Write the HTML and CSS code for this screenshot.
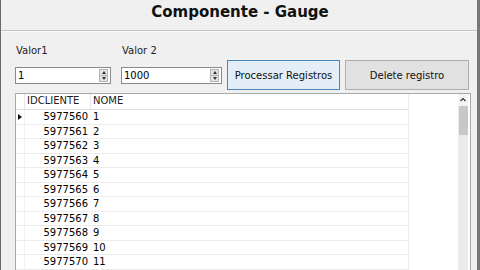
FILE: index.html
```html
<!DOCTYPE html>
<html lang="pt">
  <head>
    <meta charset="UTF-8" />
    <title>Componente - Gauge</title>
    <link rel="stylesheet" href="styles.css">
  </head>
  <body>
    <div class="window">
      <div class="titlebar">
        <h1>Componente - Gauge</h1>
      </div>

      <div class="toolbar">
        <div class="field field-1">
          <label>Valor1</label>
          <div class="control">
            <div class="spin-input">
              <span class="value">1</span>
              <span class="spinner"><span class="up"></span><span class="down"></span></span>
            </div>
          </div>
        </div>
        <div class="field field-2">
          <label>Valor 2</label>
          <div class="control">
            <div class="spin-input">
              <span class="value">1000</span>
              <span class="spinner"><span class="up"></span><span class="down"></span></span>
            </div>
          </div>
        </div>
        <button class="btn btn-process">Processar Registros</button>
        <button class="btn btn-delete">Delete registro</button>
      </div>

      <div class="grid">
        <div class="rows">
          <div class="row head">
            <div class="cell mark"></div>
            <div class="cell id">IDCLIENTE</div>
            <div class="cell nome">NOME</div>
          </div>
          <div class="row">
            <div class="cell mark"><span class="current"></span></div>
            <div class="cell id">5977560</div>
            <div class="cell nome">1</div>
          </div>
          <div class="row">
            <div class="cell mark"></div>
            <div class="cell id">5977561</div>
            <div class="cell nome">2</div>
          </div>
          <div class="row">
            <div class="cell mark"></div>
            <div class="cell id">5977562</div>
            <div class="cell nome">3</div>
          </div>
          <div class="row">
            <div class="cell mark"></div>
            <div class="cell id">5977563</div>
            <div class="cell nome">4</div>
          </div>
          <div class="row">
            <div class="cell mark"></div>
            <div class="cell id">5977564</div>
            <div class="cell nome">5</div>
          </div>
          <div class="row">
            <div class="cell mark"></div>
            <div class="cell id">5977565</div>
            <div class="cell nome">6</div>
          </div>
          <div class="row">
            <div class="cell mark"></div>
            <div class="cell id">5977566</div>
            <div class="cell nome">7</div>
          </div>
          <div class="row">
            <div class="cell mark"></div>
            <div class="cell id">5977567</div>
            <div class="cell nome">8</div>
          </div>
          <div class="row">
            <div class="cell mark"></div>
            <div class="cell id">5977568</div>
            <div class="cell nome">9</div>
          </div>
          <div class="row">
            <div class="cell mark"></div>
            <div class="cell id">5977569</div>
            <div class="cell nome">10</div>
          </div>
          <div class="row">
            <div class="cell mark"></div>
            <div class="cell id">5977570</div>
            <div class="cell nome">11</div>
          </div>
        </div>
        <div class="blank"></div>
        <div class="vscroll">
          <div class="arrow">
            <svg width="10" height="12" viewBox="0 0 10 12">
              <polyline points="2.5,7 5,4.5 7.5,7" fill="none" stroke="#333" stroke-width="1.2" />
            </svg>
          </div>
          <div class="thumb"></div>
        </div>
      </div>
    </div>
  </body>
</html>
```

FILE: styles.css
```css
body {
  margin: 0;
  padding: 0;
  width: 480px;
  height: 270px;
  overflow: hidden;
  background-color: #f0f0f0;
  font-family: "DejaVu Sans", Verdana, sans-serif;
  font-size: 10px;
  color: #000;
}
.window {
  height: 270px;
  border-left: 1px solid #6b6b6b;
  border-right: 3px solid #777;
  overflow: hidden;
}
.titlebar {
  height: 30px;
  border-bottom: 1px solid #c4c4c4;
  box-shadow: 0 1px 0 #fafafa;
  text-align: center;
  padding-left: 2px;
}
.titlebar h1 {
  margin: 0;
  font-size: 15px;
  font-weight: bold;
  line-height: 24px;
  color: #111;
}
.toolbar {
  display: flex;
  align-items: flex-end;
  padding: 14px 0 0 14px;
}
.field {
  display: flex;
  flex-direction: column;
}
.field label {
  line-height: 12px;
  padding-left: 1px;
  color: #222;
}
.field .control {
  height: 30px;
  margin-top: 3px;
  padding-top: 7px;
  box-sizing: border-box;
}
.field-1 {
  width: 96px;
  margin-right: 10px;
}
.field-2 {
  width: 101px;
  margin-right: 5px;
}
.spin-input {
  height: 17px;
  box-sizing: border-box;
  border: 1px solid #8a8a8a;
  background-color: #fff;
  display: flex;
  align-items: center;
  justify-content: space-between;
  padding: 0 2px 0 2px;
}
.spin-input .value {
  line-height: 15px;
}
.spinner {
  display: flex;
  flex-direction: column;
  width: 9px;
  height: 13px;
}
.spinner span {
  flex: 1;
  position: relative;
  background-color: #e4e4e4;
  border: 1px solid #b4b4b4;
}
.spinner .down {
  border-top: none;
}
.spinner span::after {
  content: "";
  position: absolute;
  left: 1.5px;
  border-left: 2.5px solid transparent;
  border-right: 2.5px solid transparent;
}
.spinner .up::after {
  top: 1px;
  border-bottom: 3px solid #333;
}
.spinner .down::after {
  top: 1px;
  border-top: 3px solid #333;
}
.btn {
  height: 30px;
  margin: 0;
  padding: 0;
  font-family: "DejaVu Sans", Verdana, sans-serif;
  font-size: 10px;
  color: #111;
}
.btn-process {
  width: 113px;
  margin-right: 5px;
  background-color: #e3eef8;
  border: 1px solid #4a87b8;
}
.btn-delete {
  width: 124px;
  background-color: #e1e1e1;
  border: 1px solid #adadad;
}
.grid {
  display: flex;
  margin: 3px 0 0 14px;
  width: 454px;
  height: 190px;
  border: 1px solid #a9a9a9;
  border-bottom: none;
  background-color: #fff;
}
.rows {
  width: 392px;
  border-right: 1px solid #ececec;
}
.row {
  display: flex;
  height: 14.5px;
  box-sizing: border-box;
  border-bottom: 1px solid #ececec;
  line-height: 13.5px;
}
.row.head {
  height: 16px;
  line-height: 14px;
  border-bottom-color: #dedede;
  color: #222;
}
.cell {
  box-sizing: border-box;
  white-space: nowrap;
}
.mark {
  width: 9px;
  border-right: 1px solid #f0f0f0;
  display: flex;
  align-items: center;
  justify-content: center;
}
.current {
  width: 0;
  height: 0;
  border-left: 4px solid #111;
  border-top: 3px solid transparent;
  border-bottom: 3px solid transparent;
}
.id {
  width: 66px;
  text-align: right;
  padding-right: 3px;
}
.head .id {
  text-align: left;
  padding-left: 2px;
  border-right: 1px solid #e6e6e6;
}
.head .mark {
  border-right-color: #e6e6e6;
}
.nome {
  flex: 1;
  padding-left: 2px;
}
.blank {
  width: 49px;
}
.vscroll {
  width: 10px;
  background-color: #ebebeb;
}
.vscroll .arrow {
  height: 12px;
  background-color: #f4f4f4;
}
.vscroll .arrow svg {
  display: block;
}
.vscroll .thumb {
  height: 29px;
  margin: 0 0.5px;
  background-color: #c8c8c8;
}
```
